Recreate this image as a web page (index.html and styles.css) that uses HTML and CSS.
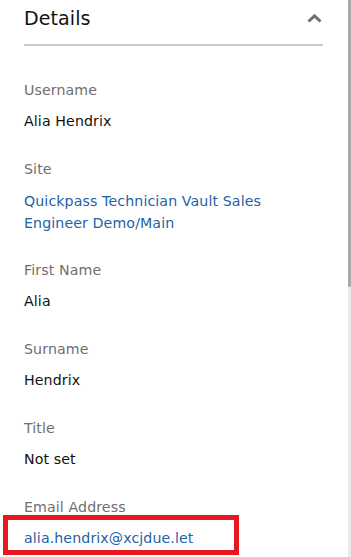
FILE: index.html
```html
<!DOCTYPE html>
<html>

<head>
	<meta charset="utf-8" />
	<link rel="stylesheet" href="styles.css">
</head>

<body>

	<div class="pane">
		<div class="details">
			<div class="details-head">
				<span class="details-title">Details</span>
				<svg class="details-toggle" width="15" height="9" viewBox="0 0 15 9">
					<polyline points="1.5,7.5 7.5,1.8 13.5,7.5" />
				</svg>
			</div>

			<div class="field">
				<div class="field-label">Username</div>
				<div class="field-value">Alia Hendrix</div>
			</div>

			<div class="field">
				<div class="field-label">Site</div>
				<div class="field-value field-link field-multi">Quickpass Technician Vault Sales Engineer Demo/Main</div>
			</div>

			<div class="field">
				<div class="field-label">First Name</div>
				<div class="field-value">Alia</div>
			</div>

			<div class="field">
				<div class="field-label">Surname</div>
				<div class="field-value">Hendrix</div>
			</div>

			<div class="field">
				<div class="field-label">Title</div>
				<div class="field-value">Not set</div>
			</div>

			<div class="field">
				<div class="field-label">Email Address</div>
				<div class="field-value field-link field-marked">alia.hendrix@xcjdue.let</div>
			</div>
		</div>

		<div class="scrollbar">
			<div class="scrollbar-thumb"></div>
		</div>
	</div>

</body>

</html>
```

FILE: styles.css
```css
html,
body {
	margin: 0;
	height: 100%;
	overflow: hidden;
}

body {
	font-family: "DejaVu Sans", "Open Sans", sans-serif;
	font-size: 14.2px;
	letter-spacing: 0.1px;
	background-color: #fff;
	color: #111;
}

.pane {
	display: flex;
	height: 100%;
}

.details {
	flex: 1;
	padding: 0 25px 0 24px;
}

.details-head {
	display: flex;
	align-items: center;
	justify-content: space-between;
	height: 46px;
	padding-bottom: 8px;
	box-sizing: border-box;
	border-bottom: 2px solid #cccccc;
	margin-bottom: 34px;
}

.details-title {
	font-size: 19px;
	color: #111;
}

.details-toggle {
	margin-right: 1px;
}

.details-toggle polyline {
	fill: none;
	stroke: #717171;
	stroke-width: 3;
}

.field {
	margin-bottom: 28px;
}

.field-label {
	line-height: 20px;
	color: #6f6f6f;
	margin-bottom: 11px;
}

.field-value {
	line-height: 20px;
}

.field-link {
	color: #1f62a6;
}

.field-multi {
	line-height: 22px;
	margin-top: 4px;
	margin-bottom: -2px;
}

.field-marked {
	position: relative;
}

.field-marked::after {
	content: "";
	position: absolute;
	left: -21px;
	top: -13px;
	width: 226px;
	height: 30px;
	border: 5px solid #e8161f;
}

.scrollbar {
	width: 3px;
	background-color: #e9e9e9;
}

.scrollbar-thumb {
	height: 287px;
	background-color: #a9a9a9;
	border-radius: 0 0 2px 2px;
}
```
